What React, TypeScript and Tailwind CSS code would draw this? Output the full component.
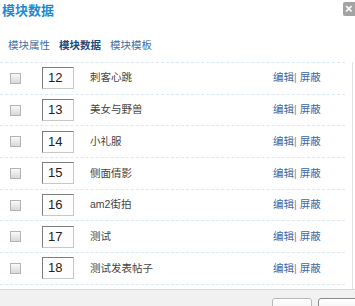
import React from 'react';

const rows = [
  { id: 12, name: '刺客心跳' },
  { id: 13, name: '美女与野兽' },
  { id: 14, name: '小礼服' },
  { id: 15, name: '侧面倩影' },
  { id: 16, name: 'am2街拍' },
  { id: 17, name: '测试' },
  { id: 18, name: '测试发表帖子' },
];

export default function App() {
  return (
    <div
      className="relative w-[355px] h-[306px] overflow-hidden bg-white text-[12px] text-[#333]"
      style={{ fontFamily: '"Liberation Sans", "Noto Sans CJK SC", sans-serif' }}
    >
      {/* title */}
      <div className="h-[20px] pl-[2px] pt-[3px] text-[13px] leading-[15px] font-bold text-[#1d8ad0]">模块数据</div>
      <button className="absolute top-[2px] right-[-4px] w-[16px] h-[14px] rounded-[2px] bg-[#a3a3a3] text-white text-[13px] leading-[14px] font-bold text-left pl-[2px]">
        ×
      </button>

      {/* tabs */}
      <div className="flex gap-[9px] pl-[8px] pt-[19px] h-[42px] leading-[13px] text-[10.5px]">
        <span className="text-[#3f6fa3]">模块属性</span>
        <span className="font-bold text-[#1d4a7d]">模块数据</span>
        <span className="text-[#3f6fa3]">模块模板</span>
      </div>

      {/* list */}
      <div className="flex">
        <div className="w-[345px] border-t border-dashed border-[#dbe7f4]">
          {rows.map((r) => (
            <div key={r.id} className="flex items-center h-[31.7px] border-b border-dashed border-[#dbe7f4] text-[10.5px]">
              <div className="ml-[10px] w-[11px] h-[11px] border border-[#b4b4b4] bg-gradient-to-b from-[#fafafa] to-[#d8d8d8]" />
              <div className="ml-[21px] w-[32px] h-[22px] border border-[#c8c8c8] border-t-[#7d7d7d] border-l-[#7d7d7d] bg-[#fdfdfd] pl-[5px] text-[13px] leading-[20px] text-[#222]">
                {r.id}
              </div>
              <div className="ml-[16px] flex-1 text-[#444]">{r.name}</div>
              <div className="w-[72px] text-[#3a6aa6]">
                编辑<span className="text-[#cc6666]">|</span> 屏蔽
              </div>
            </div>
          ))}
        </div>
        <div className="ml-[7px] w-[3px] border-l border-[#e2e2e2] h-[228px]" />
      </div>

      {/* footer, buttons run past the bottom edge */}
      <div className="absolute left-0 right-0 top-[289px] bottom-0 bg-[#f1f1f1] border-t border-[#dadada]">
        <div className="flex justify-end gap-[6px] pt-[8px] mr-[-3px]">
          <button className="w-[40px] h-[26px] rounded-[3px] border border-[#b8b8b8] bg-gradient-to-b from-white to-[#e6e6e6] text-[11px] text-[#333] leading-[30px]">
            确定
          </button>
          <button className="w-[40px] h-[26px] rounded-[3px] border border-[#8a8a8a] bg-gradient-to-b from-white to-[#e6e6e6] text-[11px] text-[#333] leading-[30px]">
            关闭
          </button>
        </div>
      </div>
    </div>
  );
}
